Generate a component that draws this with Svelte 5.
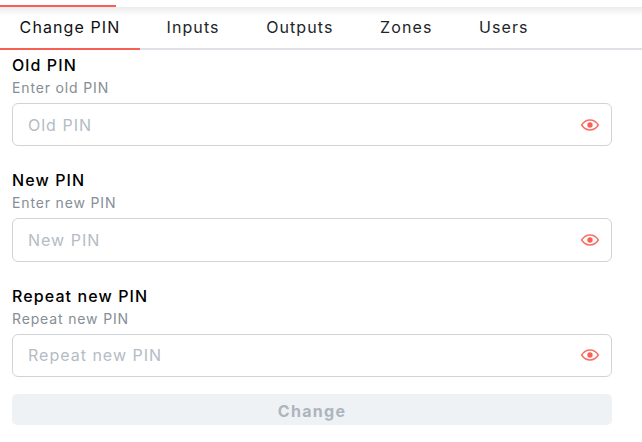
<script>
	const tabs = ['Change PIN', 'Inputs', 'Outputs', 'Zones', 'Users'];
	const fields = [
		{ label: 'Old PIN', hint: 'Enter old PIN', placeholder: 'Old PIN' },
		{ label: 'New PIN', hint: 'Enter new PIN', placeholder: 'New PIN' },
		{ label: 'Repeat new PIN', hint: 'Repeat new PIN', placeholder: 'Repeat new PIN' }
	];
</script>

<div class="page">
	<div class="progress"><div class="progress-fill"></div></div>
	<nav class="tabs">
		{#each tabs as tab, i}
			<button class="tab" class:active={i === 0}>{tab}</button>
		{/each}
	</nav>
	<form class="form">
		{#each fields as field}
			<div class="field">
				<div class="label">{field.label}</div>
				<div class="hint">{field.hint}</div>
				<div class="input-wrap">
					<input type="password" class="input" placeholder={field.placeholder} />
					<svg class="eye" viewBox="0 0 24 24" width="20" height="20" fill="none" stroke="#fb6f66" stroke-width="1.800">
						<path d="M2 12c2.600-4 6-6 10-6s7.400 2 10 6c-2.600 4-6 6-10 6s-7.400-2-10-6z" />
						<circle cx="12" cy="12" r="3.200" fill="#fa5f55" stroke="none" />
					</svg>
				</div>
			</div>
		{/each}
		<button class="submit" type="button" disabled>Change</button>
	</form>
</div>

<style>
	:global(body) {
		margin: 0;
		background: white;
	}

	.page {
		width: 642px;
		height: 442px;
		overflow: hidden;
		font-family: Inter, "Noto Sans", sans-serif;
	}

	.progress {
		height: 7px;
		display: flex;
		align-items: flex-end;
	}

	.progress-fill {
		width: 116px;
		height: 2px;
		background: #fa5f55;
	}

	.tabs {
		display: flex;
		gap: 6.500px;
		height: 43px;
		box-sizing: border-box;
		border-bottom: 2px solid #dee2e6;
		background: linear-gradient(#ececec, #fff 9px);
	}

	.tab {
		padding: 0 20px 1px;
		margin-bottom: -2px;
		border: 0;
		border-bottom: 2px solid transparent;
		background: none;
		font: inherit;
		font-size: 16px;
		letter-spacing: 1.100px;
		color: #212529;
		white-space: nowrap;
	}

	.tab.active {
		padding: 0 0 1px;
		width: 140px;
		border-bottom-color: #fa5f55;
		color: #111;
	}

	.form {
		padding: 5px 30px 0 12px;
		display: flex;
		flex-direction: column;
		gap: 17px;
	}

	.field + .field {
		margin-top: 7px;
	}

	.label {
		font-size: 16px;
		font-weight: 500;
		line-height: 20px;
		letter-spacing: 1.100px;
		color: #000;
	}

	.hint {
		font-size: 14px;
		line-height: 18px;
		margin-top: 4px;
		letter-spacing: 0.850px;
		color: #868e96;
	}

	.input-wrap {
		position: relative;
		margin-top: 6px;
	}

	.input {
		display: block;
		width: 100%;
		height: 43.400px;
		box-sizing: border-box;
		padding: 0 40px 0 15px;
		border: 1px solid #ced4da;
		border-radius: 6px;
		font: inherit;
		font-size: 16px;
		letter-spacing: 1px;
		outline: none;
	}

	.input::placeholder {
		color: #b4bcc4;
		opacity: 1;
	}

	.eye {
		position: absolute;
		right: 12px;
		top: 11.500px;
	}

	.submit {
		height: 31px;
		padding: 2px 0 0;
		border: 0;
		border-radius: 5px;
		background: #eff2f5;
		color: #adb5bd;
		font: inherit;
		font-size: 16px;
		font-weight: 700;
		letter-spacing: 1.300px;
	}
</style>
